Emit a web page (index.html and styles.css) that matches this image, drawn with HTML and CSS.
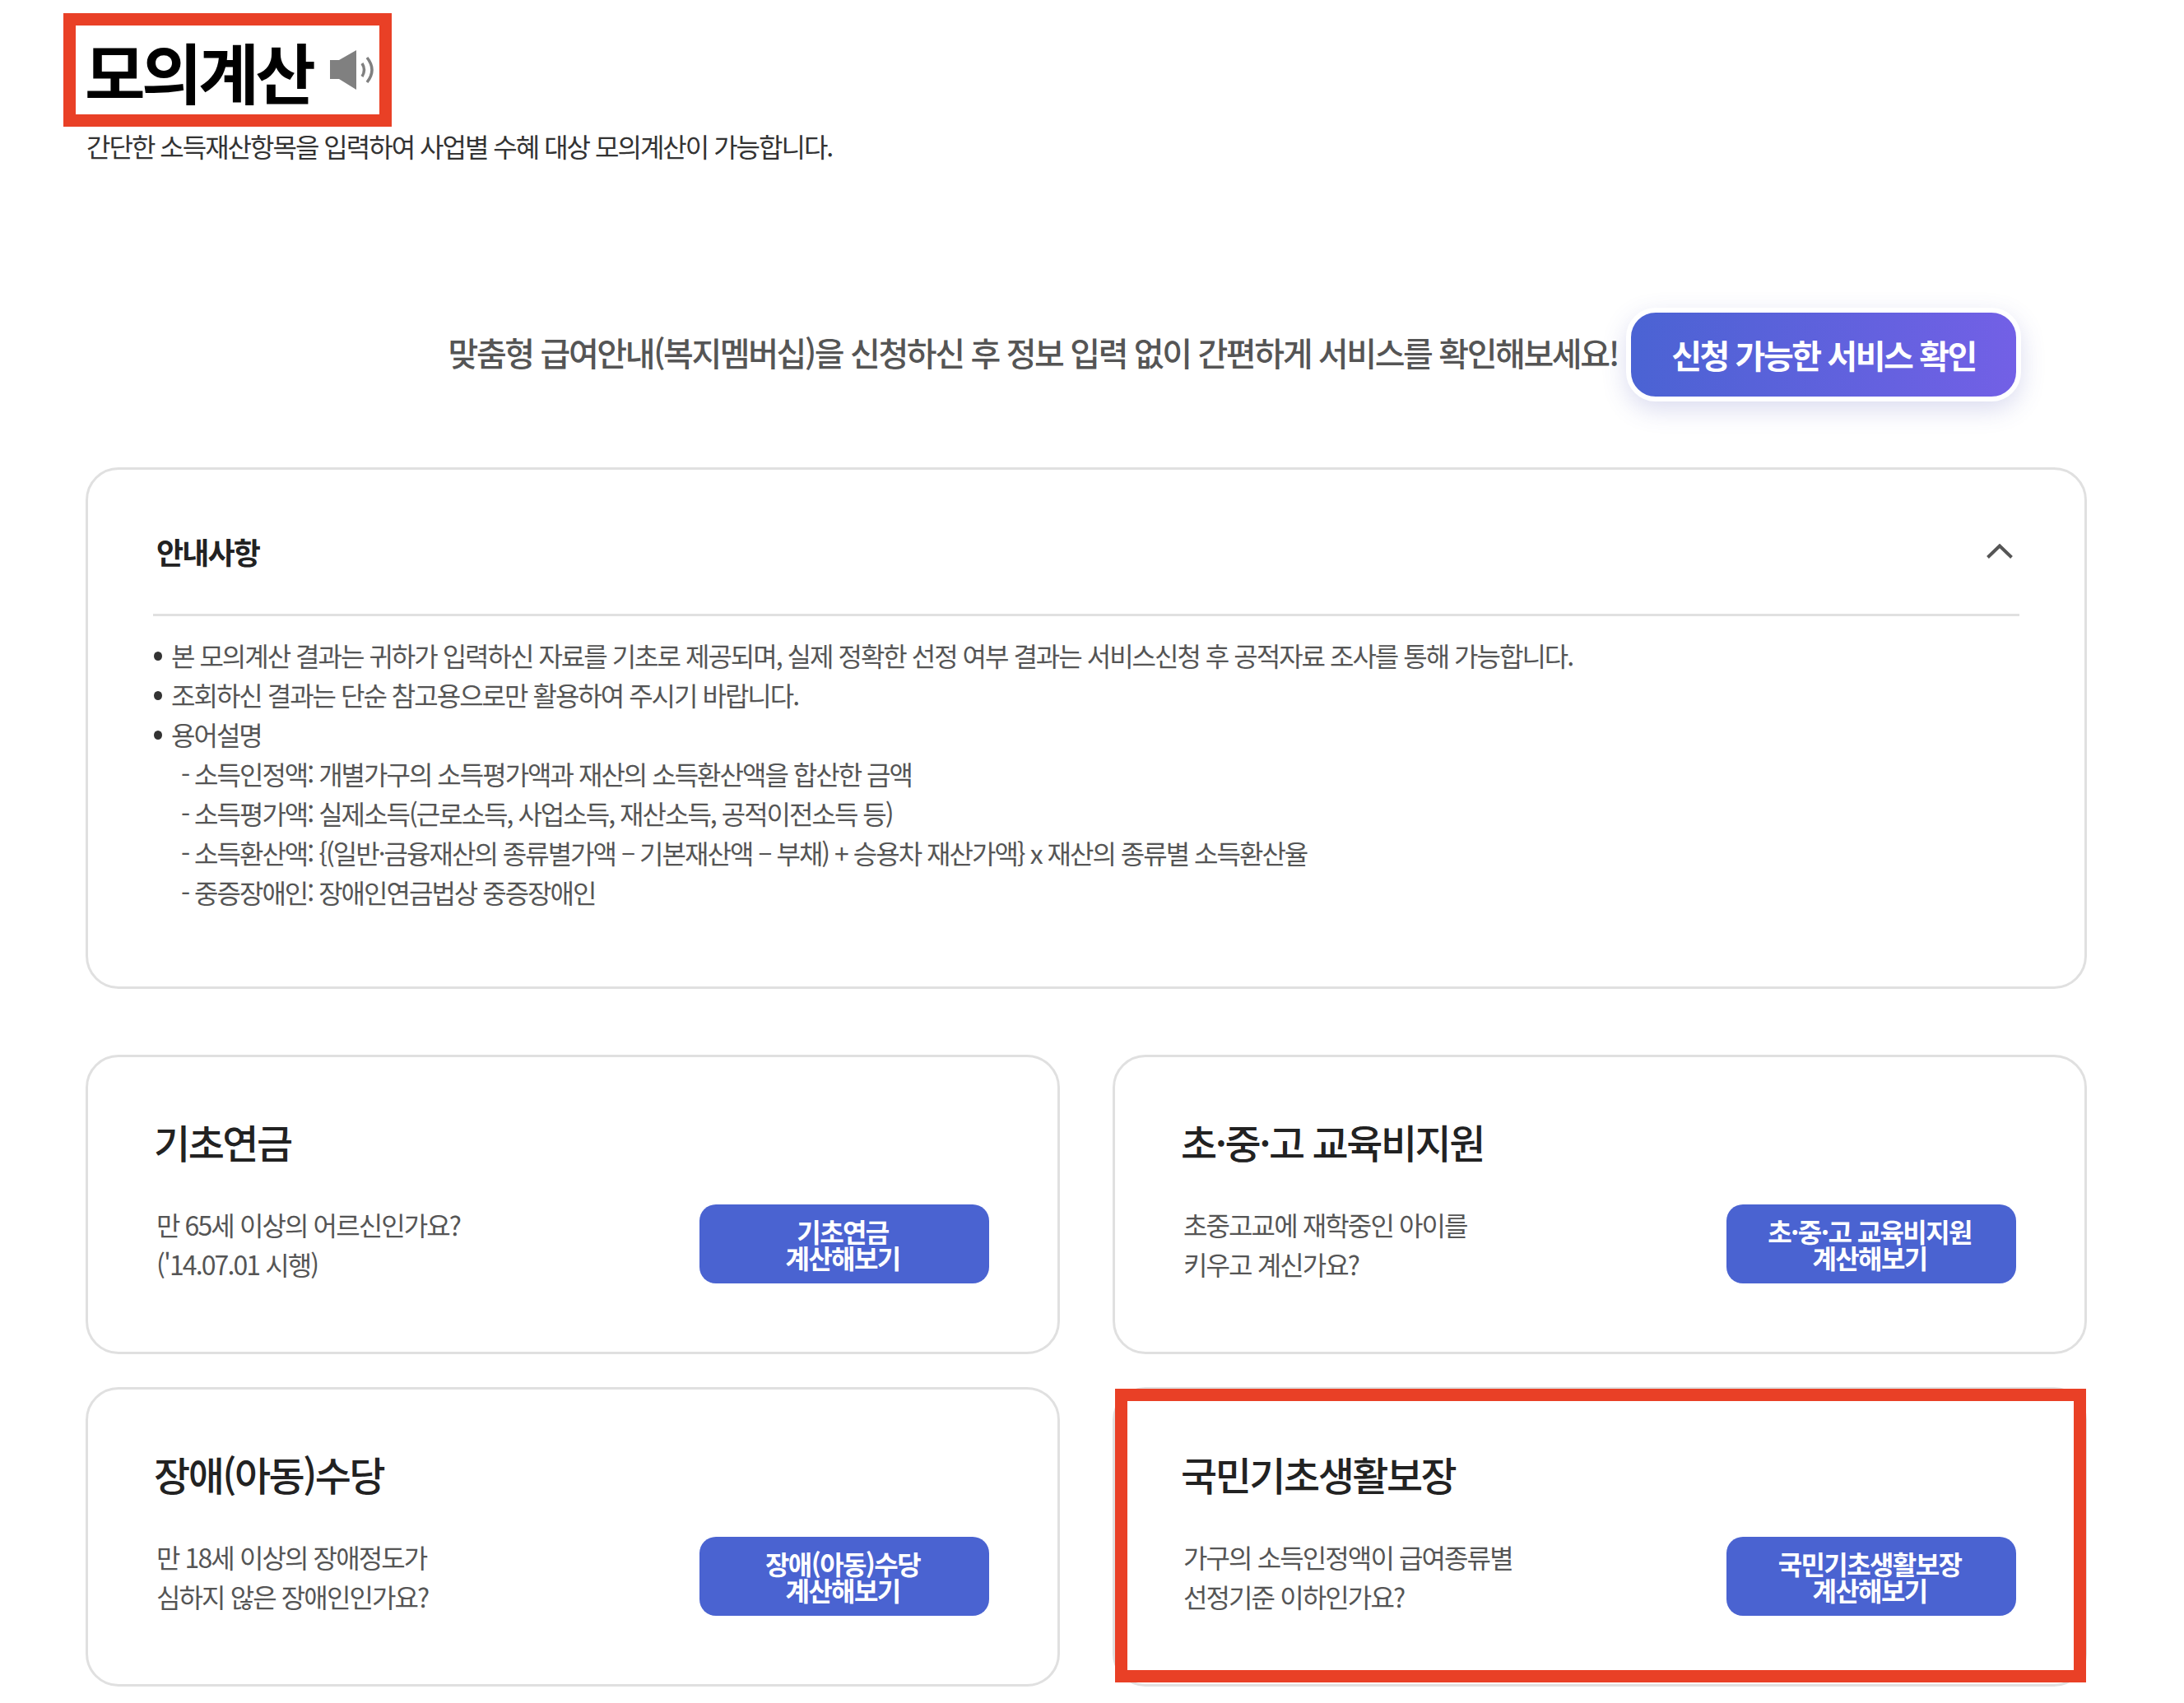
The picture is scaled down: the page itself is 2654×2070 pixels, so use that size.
FILE: index.html
```html
<!DOCTYPE html>
<html lang="ko">
<head>
    <meta charset="UTF-8">
    <title>모의계산</title>
    <link rel="stylesheet" href="styles.css">
</head>
<body>
    <div class="page">
        <div class="title-box">
            <h1>모의계산</h1>
            <svg class="speaker" viewBox="0 0 54 48" width="54" height="48">
                <path d="M0 12H11L32 0V48L11 35H0Z" fill="#808080"/>
                <path d="M39 16Q44 24 39 32" fill="none" stroke="#808080" stroke-width="3.5"/>
                <path d="M45 9Q57 24 45 39" fill="none" stroke="#808080" stroke-width="3.5"/>
            </svg>
        </div>
        <p class="subtitle">간단한 소득재산항목을 입력하여 사업별 수혜 대상 모의계산이 가능합니다.</p>

        <div class="promo">
            <span class="promo-text">맞춤형 급여안내(복지멤버십)을 신청하신 후 정보 입력 없이 간편하게 서비스를 확인해보세요!</span>
            <button class="promo-btn">신청 가능한 서비스 확인</button>
        </div>

        <section class="notice">
            <div class="notice-head">
                <h2>안내사항</h2>
                <svg class="chevron" viewBox="0 0 32 18" width="32" height="18">
                    <path d="M1.5 16.5L16 2.5L30.5 16.5" fill="none" stroke="#555" stroke-width="4"/>
                </svg>
            </div>
            <ul class="notice-list">
                <li>본 모의계산 결과는 귀하가 입력하신 자료를 기초로 제공되며, 실제 정확한 선정 여부 결과는 서비스신청 후 공적자료 조사를 통해 가능합니다.</li>
                <li>조회하신 결과는 단순 참고용으로만 활용하여 주시기 바랍니다.</li>
                <li>용어설명</li>
                <li class="sub">- 소득인정액: 개별가구의 소득평가액과 재산의 소득환산액을 합산한 금액</li>
                <li class="sub">- 소득평가액: 실제소득(근로소득, 사업소득, 재산소득, 공적이전소득 등)</li>
                <li class="sub">- 소득환산액: {(일반·금융재산의 종류별가액 – 기본재산액 – 부채) + 승용차 재산가액} x 재산의 종류별 소득환산율</li>
                <li class="sub">- 중증장애인: 장애인연금법상 중증장애인</li>
            </ul>
        </section>

        <div class="cards">
            <div class="card">
                <h3>기초연금</h3>
                <div class="card-row">
                    <p>만 65세 이상의 어르신인가요?<br>('14.07.01 시행)</p>
                    <button class="calc-btn">기초연금<br>계산해보기</button>
                </div>
            </div>
            <div class="card">
                <h3>초·중·고 교육비지원</h3>
                <div class="card-row">
                    <p>초중고교에 재학중인 아이를<br>키우고 계신가요?</p>
                    <button class="calc-btn">초·중·고 교육비지원<br>계산해보기</button>
                </div>
            </div>
            <div class="card">
                <h3>장애(아동)수당</h3>
                <div class="card-row">
                    <p>만 18세 이상의 장애정도가<br>심하지 않은 장애인인가요?</p>
                    <button class="calc-btn">장애(아동)수당<br>계산해보기</button>
                </div>
            </div>
            <div class="card">
                <div class="highlight"></div>
                <h3>국민기초생활보장</h3>
                <div class="card-row">
                    <p>가구의 소득인정액이 급여종류별<br>선정기준 이하인가요?</p>
                    <button class="calc-btn">국민기초생활보장<br>계산해보기</button>
                </div>
            </div>
        </div>
    </div>
</body>
</html>
```

FILE: styles.css
```css
body {
    margin: 0;
    background-color: #fff;
    font-family: "Noto Sans CJK KR", "Noto Sans", sans-serif;
}
.page {
    padding: 16px 118px 0 104px;
}
.title-box {
    display: flex;
    align-items: center;
    box-sizing: border-box;
    width: 399px;
    height: 138px;
    margin-left: -27px;
    padding-left: 11px;
    border: 15px solid #e94026;
    background-color: #fff;
}
h1 {
    flex: none;
    margin: 0;
    font-size: 80px;
    line-height: 1;
    font-weight: 700;
    letter-spacing: -4.5px;
    white-space: nowrap;
    color: #000;
}
.speaker {
    flex: none;
    margin-left: 22px;
}
.subtitle {
    margin: -1px 0 0 1px;
    font-size: 32px;
    line-height: 48px;
    letter-spacing: -2px;
    color: #333;
}
.promo {
    display: flex;
    justify-content: flex-end;
    align-items: center;
    gap: 10px;
    margin-top: 173px;
    padding-right: 80px;
}
.promo-text {
    margin-bottom: 6px;
    font-size: 40px;
    font-weight: 500;
    letter-spacing: -2.4px;
    color: #555;
}
.promo-btn {
    box-sizing: border-box;
    width: 480px;
    height: 114px;
    border: 6px solid #fff;
    border-radius: 36px;
    background-image: linear-gradient(90deg, #4a63d3, #7360e6);
    background-origin: border-box;
    box-shadow: 0 10px 30px rgba(74, 80, 180, 0.2);
    font-family: inherit;
    font-size: 40px;
    font-weight: 700;
    letter-spacing: -2.45px;
    color: #fff;
}
.notice {
    box-sizing: border-box;
    height: 634px;
    margin-top: 80px;
    padding: 0 79px;
    border: 3px solid #e0e0e0;
    border-radius: 40px;
}
.notice-head {
    display: flex;
    justify-content: space-between;
    align-items: center;
    box-sizing: border-box;
    height: 178px;
    padding: 22px 8px 0 4px;
    border-bottom: 3px solid #e0e0e0;
}
h2 {
    margin: 0;
    font-size: 36px;
    font-weight: 700;
    letter-spacing: -1.9px;
    color: #222;
}
.notice-list {
    margin: 23px 0 0;
    padding: 0 0 0 22px;
    list-style: none;
    font-size: 32px;
    line-height: 48px;
    letter-spacing: -2px;
    color: #555;
}
.notice-list li {
    position: relative;
}
.notice-list li::before {
    content: "";
    position: absolute;
    left: -21px;
    top: 20px;
    width: 10px;
    height: 11px;
    border-radius: 50%;
    background-color: #333;
}
.notice-list li.sub {
    padding-left: 12px;
}
.notice-list li.sub::before {
    display: none;
}
.cards {
    display: grid;
    grid-template-columns: 1fr 1fr;
    column-gap: 64px;
    row-gap: 40px;
    margin-top: 80px;
}
.card {
    position: relative;
    box-sizing: border-box;
    height: 364px;
    padding: 0 83px 0 82px;
    border: 3px solid #e0e0e0;
    border-radius: 40px;
}
.highlight {
    position: absolute;
    left: 0;
    right: -2px;
    top: -1px;
    bottom: 2px;
    border: 15px solid #e94026;
}
h3 {
    box-sizing: border-box;
    height: 179px;
    margin: 0 0 0 -2px;
    padding-top: 66px;
    font-size: 48px;
    line-height: 72px;
    font-weight: 500;
    letter-spacing: -2.5px;
    color: #222;
}
.card-row {
    display: flex;
    justify-content: space-between;
    align-items: center;
}
.card-row p {
    margin: 0 0 0 1px;
    font-size: 32px;
    line-height: 48px;
    letter-spacing: -1.9px;
    color: #555;
}
.calc-btn {
    flex: none;
    width: 352px;
    height: 96px;
    padding: 0 4px 0 0;
    border: none;
    border-radius: 20px;
    background-color: #4a63d1;
    font-family: inherit;
    font-size: 32px;
    line-height: 32px;
    font-weight: 700;
    letter-spacing: -1.6px;
    color: #fff;
}
```
